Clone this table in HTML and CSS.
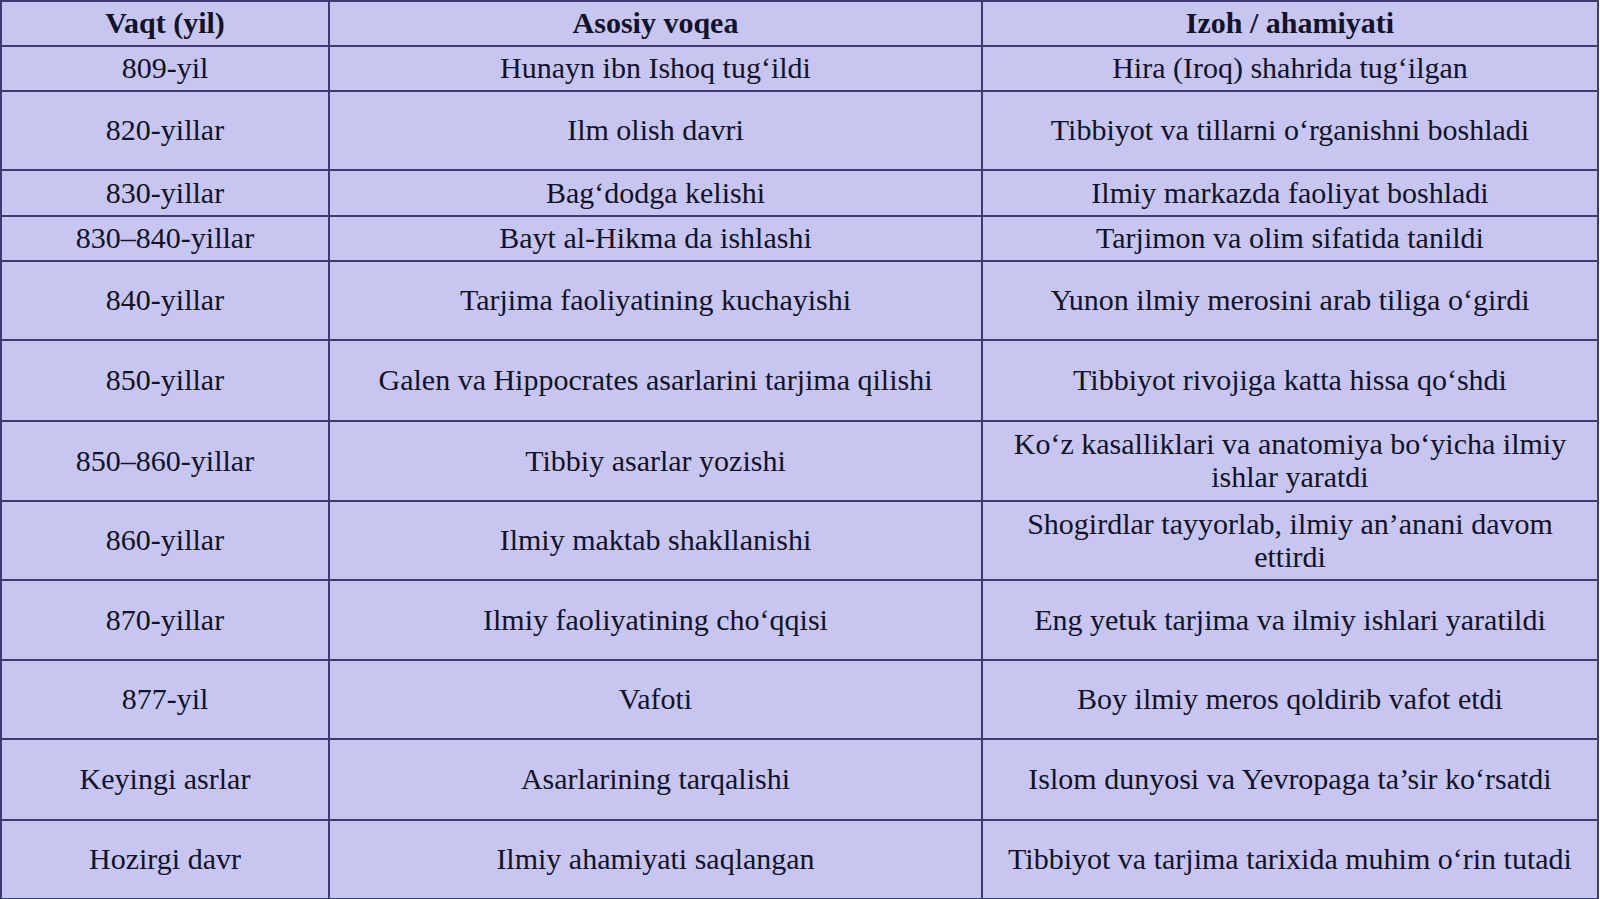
FILE: index.html
```html
<!DOCTYPE html>
<html lang="uz">
<head>
<meta charset="utf-8">
<title>Hunayn ibn Ishoq</title>
<link rel="stylesheet" href="styles.css">
</head>
<body>
<table class="timeline">
  <colgroup>
    <col class="c-year">
    <col class="c-event">
    <col class="c-note">
  </colgroup>
  <thead>
    <tr class="h45"><th>Vaqt (yil)</th><th>Asosiy voqea</th><th>Izoh / ahamiyati</th></tr>
  </thead>
  <tbody>
    <tr class="h45"><td>809-yil</td><td>Hunayn ibn Ishoq tug‘ildi</td><td>Hira (Iroq) shahrida tug‘ilgan</td></tr>
    <tr class="h79"><td>820-yillar</td><td>Ilm olish davri</td><td>Tibbiyot va tillarni o‘rganishni boshladi</td></tr>
    <tr class="h46"><td>830-yillar</td><td>Bag‘dodga kelishi</td><td>Ilmiy markazda faoliyat boshladi</td></tr>
    <tr class="h45"><td>830–840-yillar</td><td>Bayt al-Hikma da ishlashi</td><td>Tarjimon va olim sifatida tanildi</td></tr>
    <tr class="h79"><td>840-yillar</td><td>Tarjima faoliyatining kuchayishi</td><td>Yunon ilmiy merosini arab tiliga o‘girdi</td></tr>
    <tr class="h81"><td>850-yillar</td><td>Galen va Hippocrates asarlarini tarjima qilishi</td><td>Tibbiyot rivojiga katta hissa qo‘shdi</td></tr>
    <tr class="h80"><td>850–860-yillar</td><td>Tibbiy asarlar yozishi</td><td>Ko‘z kasalliklari va anatomiya bo‘yicha ilmiy ishlar yaratdi</td></tr>
    <tr class="h79"><td>860-yillar</td><td>Ilmiy maktab shakllanishi</td><td>Shogirdlar tayyorlab, ilmiy an’anani davom ettirdi</td></tr>
    <tr class="h80"><td>870-yillar</td><td>Ilmiy faoliyatining cho‘qqisi</td><td>Eng yetuk tarjima va ilmiy ishlari yaratildi</td></tr>
    <tr class="h79"><td>877-yil</td><td>Vafoti</td><td>Boy ilmiy meros qoldirib vafot etdi</td></tr>
    <tr class="h81"><td>Keyingi asrlar</td><td>Asarlarining tarqalishi</td><td>Islom dunyosi va Yevropaga ta’sir ko‘rsatdi</td></tr>
    <tr class="h79"><td>Hozirgi davr</td><td>Ilmiy ahamiyati saqlangan</td><td>Tibbiyot va tarjima tarixida muhim o‘rin tutadi</td></tr>
  </tbody>
</table>
</body>
</html>
```
FILE: styles.css
```css
html, body {
  margin: 0;
  padding: 0;
  background: #ffffff;
}

.timeline {
  border-collapse: collapse;
  table-layout: fixed;
  width: 1597px;
  background: #c6c6f1;
  font-family: "Liberation Serif", "Times New Roman", serif;
  font-size: 30px;
  line-height: 1.1;
  color: #121228;
}

.c-year { width: 328px; }
.c-event { width: 653px; }
.c-note { width: 616px; }

.timeline th,
.timeline td {
  border: 2px solid #3c3c72;
  padding: 0 18px 2px;
  text-align: center;
  vertical-align: middle;
  box-sizing: border-box;
}

.timeline th {
  font-weight: bold;
}

.h45 > * { height: 45px; }
.h46 > * { height: 46px; }
.h78 > * { height: 78px; }
.h79 > * { height: 79px; }
.h80 > * { height: 80px; }
.h81 > * { height: 81px; }
```
